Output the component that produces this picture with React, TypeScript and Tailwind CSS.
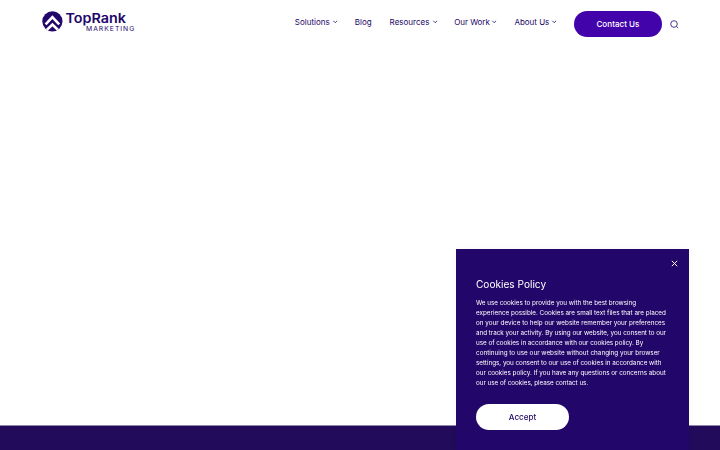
import type { ReactNode } from "react";

const Chevron = () => (
  <svg viewBox="0 0 6 4" className="h-1 w-1.5 shrink-0" fill="none" stroke="currentColor" strokeWidth="0.8">
    <path d="M1.3 0.8 3.2 2.7 5.1 0.8" />
  </svg>
);

const Logo = () => (
  <svg viewBox="0 0 94 24" className="h-6 w-[94px] shrink-0" role="img" aria-label="TopRank Marketing">
    <defs>
      <clipPath id="badge">
        <circle cx="10.4" cy="11.3" r="10.1" />
      </clipPath>
    </defs>
    <g clipPath="url(#badge)">
      <rect width="22" height="23" fill="#230669" />
      <path d="M3.6 14.3 10.4 7.2 17.2 14.3" fill="none" stroke="#fff" strokeWidth="2.6" />
      <path d="M1.6 23 10.4 14.6 19.2 23" fill="none" stroke="#fff" strokeWidth="2.6" />
    </g>
    <text x="23.4" y="12.9" textLength="60.5" lengthAdjust="spacingAndGlyphs" fontSize="13" fontWeight="600" fill="#230669">
      TopRank
    </text>
    <text x="44" y="21" textLength="48.3" fontSize="6.8" fontWeight="400" fill="#230669">
      MARKETING
    </text>
  </svg>
);

type NavItemProps = {
  className: string;
  dropdown?: boolean;
  children: ReactNode;
};

const NavItem = ({ className, dropdown, children }: NavItemProps) => (
  <a href="#" className={`flex items-center justify-between whitespace-nowrap ${className}`}>
    <span>{children}</span>
    {dropdown && <Chevron />}
  </a>
);

const policyLines = [
  { text: "We use cookies to provide you with the best browsing", className: "tracking-[-0.01px]" },
  { text: "experience possible. Cookies are small text files that are placed", className: "tracking-[0.01px]" },
  { text: "on your device to help our website remember your preferences", className: "tracking-[0.025px]" },
  { text: "and track your activity. By using our website, you consent to our", className: "tracking-[-0.015px]" },
  { text: "use of cookies in accordance with our cookies policy. By", className: "tracking-[-0.025px]" },
  { text: "continuing to use our website without changing your browser", className: "tracking-[0.03px]" },
  { text: "settings, you consent to our use of cookies in accordance with", className: "tracking-[-0.01px]" },
  { text: "our cookies policy. If you have any questions or concerns about", className: "tracking-[0px]" },
  { text: "our use of cookies, please contact us.", className: "tracking-[-0.025px]" },
];

const CookieBanner = () => (
  <aside className="fixed right-[31px] bottom-0 h-[201px] w-[233px] bg-[#230669] px-5 text-white shadow-[0_0_8px_rgba(0,0,0,0.04)]">
    <button className="absolute top-[11px] right-[11.5px]" aria-label="Close">
      <svg viewBox="0 0 7 7" className="size-[7px]" stroke="currentColor" strokeWidth="1">
        <path d="M0.8 0.8 6.2 6.2M6.2 0.8 0.8 6.2" />
      </svg>
    </button>
    <h2 className="pt-7 text-[10.1px] leading-[14px]">Cookies Policy</h2>
    <p className="mt-[7px] text-[6.3px] leading-[10px]">
      {policyLines.map((line) => (
        <span key={line.text} className={`block whitespace-nowrap ${line.className}`}>
          {line.text}
        </span>
      ))}
    </p>
    <button className="mt-4 h-[26px] w-[93px] rounded-full bg-white text-[8.1px] font-medium text-[#230669]">
      Accept
    </button>
  </aside>
);

const App = () => {
  return (
    <div className="flex h-screen flex-col overflow-hidden bg-white font-['Inter',sans-serif] text-[#230669]">
      <header className="flex h-12 shrink-0 items-start pt-[10px] pl-[41.5px]">
        <Logo />
        <nav className="ml-[159.3px] flex h-6 items-center text-[8px]">
          <NavItem className="w-[43px]" dropdown>Solutions</NavItem>
          <NavItem className="ml-[17px] w-[17px]">Blog</NavItem>
          <NavItem className="ml-[17.8px] w-12" dropdown>Resources</NavItem>
          <NavItem className="ml-[16.7px] w-[43px] tracking-[-0.06px]" dropdown>Our Work</NavItem>
          <NavItem className="ml-[17.2px] w-[42.8px] tracking-[-0.02px]" dropdown>About Us</NavItem>
        </nav>
        <a
          href="#"
          className="mt-px ml-[16.7px] flex h-[26px] w-[88px] items-center justify-center rounded-full bg-[#4203ab] text-[8.1px] font-medium text-white"
        >
          Contact Us
        </a>
        <button className="mt-[10px] ml-2" aria-label="Search">
          <svg viewBox="0 0 9 9" className="size-[9px]" fill="none" stroke="currentColor" strokeWidth="0.8">
            <circle cx="4" cy="4" r="3.3" />
            <path d="M6.4 6.4 8.1 8.1" />
          </svg>
        </button>
      </header>
      <main className="flex-1" />
      <footer className="-mt-px h-[25px] shrink-0 border-t border-[#8f84ab] bg-[#210b5a]" />
      <CookieBanner />
    </div>
  );
};

export default App;
